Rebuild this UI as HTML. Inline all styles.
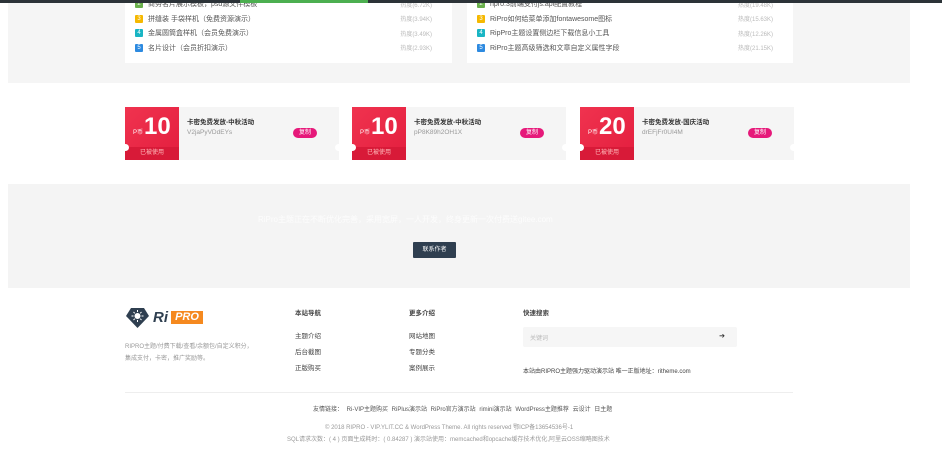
<!DOCTYPE html><html><head><meta charset="utf-8"><style>
*{margin:0;padding:0;box-sizing:border-box}
body{width:942px;height:462px;background:#fff;font-family:"Liberation Sans","Noto Sans CJK SC",sans-serif;position:relative;overflow:hidden;color:#333}
.a{position:absolute}
.bar{left:0;top:0;width:942px;height:3px;background:#2c3338}
.green{left:240px;top:0;width:128px;height:3px;background:#4caf50}
.gray1{left:8px;top:0;width:902px;height:83px;background:#f5f5f5}
.card{background:#fff;top:0;height:63px}
.row{font-size:7px;color:#555;height:14.5px;display:flex;align-items:center}
.n{display:inline-block;width:8px;height:8px;color:#fff;font-size:6px;text-align:center;line-height:8px;margin-right:5px;border-radius:1px}
.hot{position:absolute;right:10px;color:#bbb;font-size:6px}
.cp{top:107px;width:214px;height:53px;background:#f5f5f5;overflow:hidden}
.red{left:0;top:0;width:54px;height:53px;background:linear-gradient(135deg,#f0334f,#e31e3e)}
.red .bot{position:absolute;left:0;bottom:0;width:54px;height:13px;background:#d81a38;color:#fbb;font-size:6px;text-align:center;line-height:13px}
.num{position:absolute;left:8px;top:6px;color:#fff;font-size:24px;font-weight:bold}
.num small{font-size:6px;font-weight:normal;margin-right:1px}
.t1{position:absolute;left:62px;top:9px;font-size:6.5px;color:#333;font-weight:bold}
.t2{position:absolute;left:62px;top:22px;font-size:6.5px;color:#999}
.copy{position:absolute;right:22px;top:21px;width:24px;height:10px;background:#e6197a;border-radius:5px;color:#fff;font-size:6px;text-align:center;line-height:10px}
.hole{position:absolute;top:37px;width:7px;height:7px;border-radius:50%;background:#fff}
.f{font-size:6.5px;color:#444}
.g{font-size:6px;color:#999}
</style></head><body>
<div class="a gray1"></div>
<div class="a card" style="left:125px;width:327px">
 <div style="padding:0 10px" >
 <div class="row" style="margin-top:-3px;position:relative"><span class="n" style="background:#6ab04c">2</span>商务名片展示模板，psd源文件模板<span class="hot">热度(6.72K)</span></div>
 <div class="row" style="position:relative"><span class="n" style="background:#f5b800">3</span>拼缝装 手袋样机（免费资源演示）<span class="hot">热度(3.94K)</span></div>
 <div class="row" style="position:relative"><span class="n" style="background:#19b5c4">4</span>金属圆筒盒样机（会员免费演示）<span class="hot">热度(3.49K)</span></div>
 <div class="row" style="position:relative"><span class="n" style="background:#2d8ae0">5</span>名片设计（会员折扣演示）<span class="hot">热度(2.93K)</span></div>
 </div></div>
<div class="a card" style="left:467px;width:326px">
 <div style="padding:0 10px">
 <div class="row" style="margin-top:-3px;position:relative"><span class="n" style="background:#6ab04c">2</span>ripro.3前端支付js.api配置教程<span class="hot">热度(19.48K)</span></div>
 <div class="row" style="position:relative"><span class="n" style="background:#f5b800">3</span>RiPro如何给菜单添加fontawesome图标<span class="hot">热度(15.63K)</span></div>
 <div class="row" style="position:relative"><span class="n" style="background:#19b5c4">4</span>RipPro主题设置侧边栏下载信息小工具<span class="hot">热度(12.26K)</span></div>
 <div class="row" style="position:relative"><span class="n" style="background:#2d8ae0">5</span>RiPro主题高级筛选和文章自定义属性字段<span class="hot">热度(21.15K)</span></div>
 </div></div>
<div class="a bar"></div><div class="a green"></div>

<div class="a cp" style="left:125px"><div class="a red"><div class="num"><small>P币</small>10</div><div class="bot">已被使用</div></div><div class="t1">卡密免费发放-中秋活动</div><div class="t2">V2jaPyVDdEYs</div><div class="copy">复制</div><div class="hole" style="left:-3px"></div><div class="hole" style="right:-3px"></div></div>
<div class="a cp" style="left:352px"><div class="a red"><div class="num"><small>P币</small>10</div><div class="bot">已被使用</div></div><div class="t1">卡密免费发放-中秋活动</div><div class="t2">pP8K89h2OH1X</div><div class="copy">复制</div><div class="hole" style="left:-3px"></div><div class="hole" style="right:-3px"></div></div>
<div class="a cp" style="left:580px"><div class="a red"><div class="num"><small>P币</small>20</div><div class="bot">已被使用</div></div><div class="t1">卡密免费发放-国庆活动</div><div class="t2">drEFjFr0UI4M</div><div class="copy">复制</div><div class="hole" style="left:-3px"></div><div class="hole" style="right:-3px"></div></div>

<div class="a" style="left:8px;top:184px;width:902px;height:104px;background:#f4f4f4"></div>
<div class="a" style="left:258px;top:214px;font-size:8px;color:#fff;opacity:.8">RiPro主题正在不断优化完善，采用宽屏，一人开发，终身更新一次付费送gitee.com</div>
<div class="a" style="left:413px;top:242px;width:43px;height:16px;background:#2f3f50;color:#fff;font-size:6px;text-align:center;line-height:16px;border-radius:1px">联系作者</div>

<svg class="a" style="left:125px;top:307px" width="25" height="22" viewBox="0 0 25 22"><path d="M6 1h13l5 8-11.5 12L1 9z" fill="#2f3f50"/><circle cx="12.5" cy="9" r="3" fill="#fff"/><path d="M12.5 3v2M12.5 13v2M6.5 9h2M16.5 9h2M8.5 5l1.3 1.3M16.5 5l-1.3 1.3M8.5 13l1.3-1.3M16.5 13l-1.3-1.3" stroke="#fff" stroke-width="1"/></svg>
<div class="a" style="left:153px;top:309px;font-size:15px;font-weight:bold;font-style:italic;color:#2f3f50">Ri</div>
<div class="a" style="left:171px;top:311px;width:32px;height:13px;background:#f5891f;color:#fff;font-size:11px;font-style:italic;font-weight:bold;text-align:center;line-height:13px">PRO</div>
<div class="a g" style="left:125px;top:341px;line-height:12px;width:160px">RIPRO主题/付费下载/查看/余额包/自定义积分，<br>集成支付，卡密，推广奖励等。</div>
<div class="a f" style="left:295px;top:307px;font-weight:bold">本站导航</div>
<div class="a f" style="left:295px;top:329px;line-height:16px">主题介绍<br>后台截图<br>正版购买</div>
<div class="a f" style="left:409px;top:307px;font-weight:bold">更多介绍</div>
<div class="a f" style="left:409px;top:329px;line-height:16px">网站地图<br>专题分类<br>案例展示</div>
<div class="a f" style="left:523px;top:307px;font-weight:bold">快速搜索</div>
<div class="a" style="left:523px;top:327px;width:214px;height:20px;background:#f6f6f6;border-radius:2px"><span class="g" style="position:absolute;left:7px;top:6px;color:#bbb">关键词</span><span style="position:absolute;right:12px;top:5px;font-size:7px;color:#333">➔</span></div>
<div class="a" style="left:523px;top:366px;font-size:6px;color:#444">本站由RIPRO主题强力驱动演示站 唯一正版地址：ritheme.com</div>
<div class="a" style="left:125px;top:392px;width:668px;height:1px;background:#eee"></div>
<div class="a" style="left:313px;top:404px;font-size:6px;color:#555;word-spacing:2px">友情链接： Ri-VIP主题购买 RiPlus演示站 RiPro官方演示站 rimini演示站 WordPress主题推荐 云设计 日主题</div>
<div class="a g" style="left:325px;top:422px">© 2018 RIPRO - VIP.YLIT.CC &amp; WordPress Theme. All rights reserved 鄂ICP备13654536号-1</div>
<div class="a g" style="left:287px;top:434px">SQL请求次数：( 4 ) 页面生成耗时：( 0.84287 ) 演示站使用：memcached和opcache缓存技术优化,阿里云OSS缩略图技术</div>
</body></html>
